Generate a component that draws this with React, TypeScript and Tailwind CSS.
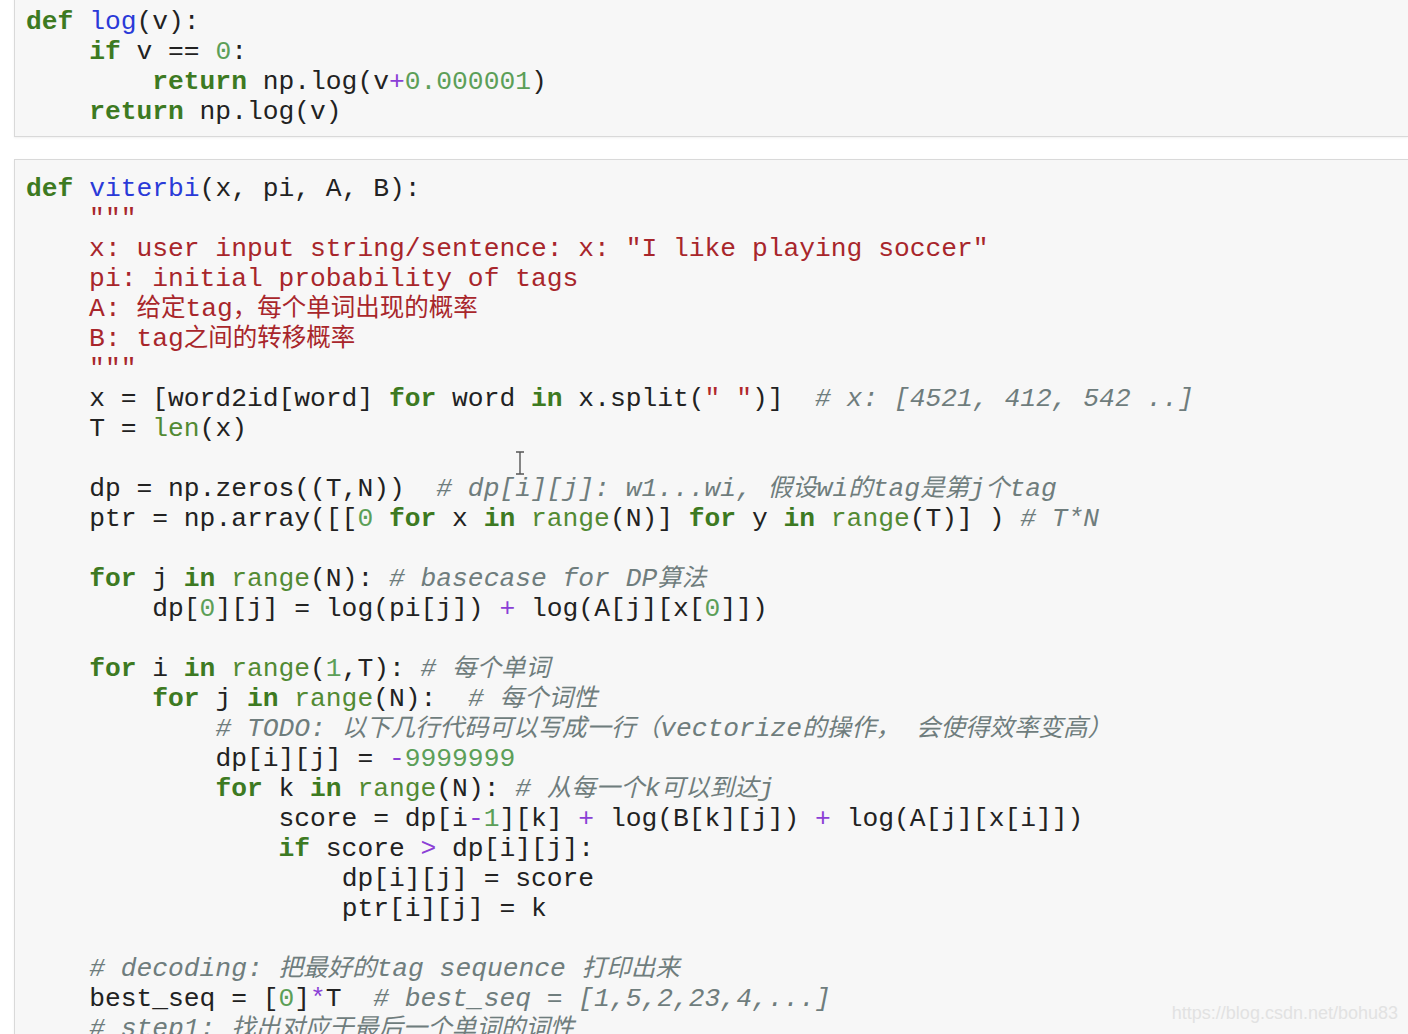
import React from 'react';

type Line = { text: string; doc?: boolean };

const KEYWORDS = new Set(['def', 'if', 'return', 'for', 'in']);
const BUILTINS = new Set(['len', 'range']);

const cellOne: Line[] = [
  { text: 'def log(v):' },
  { text: '    if v == 0:' },
  { text: '        return np.log(v+0.000001)' },
  { text: '    return np.log(v)' },
];

const cellTwo: Line[] = [
  { text: 'def viterbi(x, pi, A, B):' },
  { text: '    """', doc: true },
  { text: '    x: user input string/sentence: x: "I like playing soccer"', doc: true },
  { text: '    pi: initial probability of tags', doc: true },
  { text: '    A: 给定tag，每个单词出现的概率', doc: true },
  { text: '    B: tag之间的转移概率', doc: true },
  { text: '    """', doc: true },
  { text: '    x = [word2id[word] for word in x.split(" ")]  # x: [4521, 412, 542 ..]' },
  { text: '    T = len(x)' },
  { text: '' },
  { text: '    dp = np.zeros((T,N))  # dp[i][j]: w1...wi, 假设wi的tag是第j个tag' },
  { text: '    ptr = np.array([[0 for x in range(N)] for y in range(T)] ) # T*N' },
  { text: '' },
  { text: '    for j in range(N): # basecase for DP算法' },
  { text: '        dp[0][j] = log(pi[j]) + log(A[j][x[0]])' },
  { text: '' },
  { text: '    for i in range(1,T): # 每个单词' },
  { text: '        for j in range(N):  # 每个词性' },
  { text: '            # TODO: 以下几行代码可以写成一行（vectorize的操作， 会使得效率变高）' },
  { text: '            dp[i][j] = -9999999' },
  { text: '            for k in range(N): # 从每一个k可以到达j' },
  { text: '                score = dp[i-1][k] + log(B[k][j]) + log(A[j][x[i]])' },
  { text: '                if score > dp[i][j]:' },
  { text: '                    dp[i][j] = score' },
  { text: '                    ptr[i][j] = k' },
  { text: '' },
  { text: '    # decoding: 把最好的tag sequence 打印出来' },
  { text: '    best_seq = [0]*T  # best_seq = [1,5,2,23,4,...]' },
  { text: '    # step1: 找出对应于最后一个单词的词性' },
];

// wide glyphs are drawn a bit smaller so the runs keep the reference's width
const Wide: React.FC<{ text: string }> = ({ text }) => {
  const parts = text.split(/([\u3000-\u9fff\uff00-\uffef]+)/);
  return (
    <>
      {parts.map((p, i) =>
        /[\u3000-\u9fff\uff00-\uffef]/.test(p) ? (
          <span key={i} className="text-[24.5px]">
            {p}
          </span>
        ) : (
          <React.Fragment key={i}>{p}</React.Fragment>
        )
      )}
    </>
  );
};

const CodeLine: React.FC<{ line: Line }> = ({ line }) => {
  if (line.doc) {
    return (
      <div className="h-[30px] text-[#a8262b]">
        <Wide text={line.text} />
      </div>
    );
  }

  const re = /(#.*$)|("[^"]*")|([A-Za-z_][A-Za-z0-9_]*)|(\d+(?:\.\d+)?)|([+\-*>])|([^A-Za-z_\d#"+\-*>]+)/g;
  const out: React.ReactNode[] = [];
  let prev = '';
  let m: RegExpExecArray | null;
  let k = 0;
  while ((m = re.exec(line.text)) !== null) {
    const t = m[0];
    if (m[1]) {
      out.push(
        <span key={k++} className="italic text-[#6f7d7d]">
          <Wide text={t} />
        </span>
      );
    } else if (m[2]) {
      out.push(<span key={k++} className="text-[#b0282c]">{t}</span>);
    } else if (m[3]) {
      if (KEYWORDS.has(t)) {
        out.push(<span key={k++} className="font-bold text-[#3d7a22]">{t}</span>);
      } else if (BUILTINS.has(t)) {
        out.push(<span key={k++} className="text-[#528a33]">{t}</span>);
      } else if (prev === 'def') {
        out.push(<span key={k++} className="text-[#2a3ad8]">{t}</span>);
      } else {
        out.push(<React.Fragment key={k++}>{t}</React.Fragment>);
      }
      prev = t;
      continue;
    } else if (m[4]) {
      out.push(<span key={k++} className="text-[#5c9f58]">{t}</span>);
    } else if (m[5]) {
      out.push(<span key={k++} className="text-[#8b3fd6]">{t}</span>);
    } else {
      out.push(<React.Fragment key={k++}>{t}</React.Fragment>);
    }
  }
  return <div className="h-[30px]">{out}</div>;
};

const Cell: React.FC<{ lines: Line[]; className?: string }> = ({ lines, className }) => (
  <div
    className={`border-l border-t border-b border-[#d9d9d9] bg-[#f7f7f7] pl-[11px] pt-[14px] pb-[9px] shadow-[0_1px_2px_rgba(0,0,0,0.06)] ${className ?? ''}`}
  >
    {lines.map((l, i) => (
      <CodeLine key={i} line={l} />
    ))}
  </div>
);

export default function App() {
  return (
    <div className="relative h-[1034px] w-[1408px] overflow-hidden bg-white">
      <div className="whitespace-pre pl-[14px] font-['Liberation_Mono','Noto_Sans_CJK_SC',monospace] text-[26.3px] leading-[30px] text-[#222]">
        <Cell lines={cellOne} className="-mt-[8px]" />
        <Cell lines={cellTwo} className="mt-[22px]" />
      </div>

      {/* text cursor left in the editor */}
      <svg className="absolute left-[514px] top-[451px]" width="12" height="24" viewBox="0 0 12 24">
        <path d="M2 1h8M6 1v22M2 23h8" stroke="#555" strokeWidth="1.4" fill="none" />
      </svg>

      <div className="absolute right-[10px] bottom-[7px] font-['Liberation_Sans',sans-serif] text-[18px] text-[#e2e2e2]">
        https://blog.csdn.net/bohu83
      </div>
    </div>
  );
}
